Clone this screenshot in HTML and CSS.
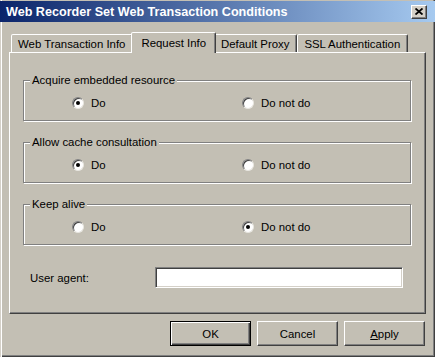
FILE: index.html
```html
<!DOCTYPE html>
<html lang="en">
<head>
    <meta charset="UTF-8">
    <title>Web Recorder Set Web Transaction Conditions</title>
    <link rel="stylesheet" href="styles.css">
</head>
<body>
    <div class="window">
        <div class="titlebar">
            <span class="title">Web Recorder Set Web Transaction Conditions</span>
            <span class="close">
                <svg width="8" height="7" viewBox="0 0 8 7">
                    <path d="M0.5 0.5 L7.5 6.5 M7.5 0.5 L0.5 6.5" stroke="#000" stroke-width="1.8" fill="none"/>
                </svg>
            </span>
        </div>
        <div class="content">
            <div class="tabs">
                <div class="tab">Web Transaction Info</div>
                <div class="tab active">Request Info</div>
                <div class="tab">Default Proxy</div>
                <div class="tab">SSL Authentication</div>
            </div>
            <div class="panel">
                <fieldset class="group">
                    <legend>Acquire embedded resource</legend>
                    <div class="options">
                        <label class="option"><span class="radio checked"></span>Do</label>
                        <label class="option"><span class="radio"></span>Do not do</label>
                    </div>
                </fieldset>
                <fieldset class="group">
                    <legend>Allow cache consultation</legend>
                    <div class="options">
                        <label class="option"><span class="radio checked"></span>Do</label>
                        <label class="option"><span class="radio"></span>Do not do</label>
                    </div>
                </fieldset>
                <fieldset class="group">
                    <legend>Keep alive</legend>
                    <div class="options">
                        <label class="option"><span class="radio"></span>Do</label>
                        <label class="option"><span class="radio checked"></span>Do not do</label>
                    </div>
                </fieldset>
                <div class="field">
                    <span class="field-label">User agent:</span>
                    <div class="input"></div>
                </div>
            </div>
            <div class="buttons">
                <button class="btn default">OK</button>
                <button class="btn">Cancel</button>
                <button class="btn"><u>A</u>pply</button>
            </div>
        </div>
    </div>
</body>
</html>
```

FILE: styles.css
```css
* {
    box-sizing: border-box;
}
body {
    margin: 0;
    font-family: "Liberation Sans", Arial, sans-serif;
    font-size: 11.4px;
    color: #000;
    background-color: #c3bfb4;
}
.window {
    width: 435px;
    height: 357px;
    padding-top: 1px;
    background-color: #c3bfb4;
    box-shadow: inset 1px 0 0 #d4d0c8, inset 2px 0 0 #fff, inset -1px -1px 0 #404040, inset -2px -2px 0 #808080;
}
.titlebar {
    height: 21px;
    display: flex;
    align-items: center;
    justify-content: space-between;
    padding: 0 8px 0 6px;
    background: linear-gradient(to right, #0a246a, #a6caf0);
}
.title {
    color: #fff;
    font-weight: bold;
    font-size: 12.6px;
}
.close {
    width: 16px;
    height: 14px;
    display: flex;
    align-items: center;
    justify-content: center;
    background-color: #d4d0c8;
    border: 1px solid;
    border-color: #fff #404040 #404040 #fff;
    box-shadow: inset -1px -1px 0 #808080;
}
.content {
    padding: 10px 9px 0;
}
.tabs {
    height: 20px;
    display: flex;
    align-items: flex-end;
    padding-left: 2px;
}
.tab {
    height: 18px;
    padding: 0 7px 0 6px;
    display: flex;
    align-items: center;
    border: 1px solid;
    border-bottom: none;
    border-color: #fff #404040 transparent #fff;
    border-radius: 2px 2px 0 0;
    box-shadow: inset -1px 0 0 #808080;
    background-color: #c3bfb4;
}
.tab.active {
    height: 21px;
    margin: 0 -2px -1px;
    padding: 0 9px;
    position: relative;
    z-index: 2;
}
.panel {
    height: 262px;
    padding: 20px 14px 0 13px;
    border: 1px solid;
    border-color: #fff #404040 #404040 #fff;
    box-shadow: inset -1px -1px 0 #808080;
}
.group {
    margin: 0 0 14px;
    padding: 9px 0 10px;
    min-width: 0;
    border: 1px solid #808080;
    box-shadow: inset 1px 1px 0 #fff, 1px 1px 0 #fff;
}
.group legend {
    margin-left: 6px;
    padding: 0 2px;
    line-height: 14px;
    background-color: #c3bfb4;
}
.options {
    display: grid;
    grid-template-columns: 170px auto;
    padding-left: 48px;
}
.option {
    display: flex;
    align-items: center;
    gap: 7px;
    line-height: 14px;
}
.radio {
    width: 12px;
    height: 12px;
    border-radius: 50%;
    background-color: #fff;
    border: 1px solid;
    border-color: #808080 #e8e6e0 #e8e6e0 #808080;
    box-shadow: inset 1px 1px 0 #404040;
    display: flex;
    align-items: center;
    justify-content: center;
}
.radio.checked::after {
    content: "";
    width: 4px;
    height: 4px;
    border-radius: 50%;
    background-color: #000;
}
.field {
    display: flex;
    align-items: center;
    margin-top: 22px;
    padding-left: 7px;
}
.field-label {
    width: 125px;
}
.input {
    width: 248px;
    height: 21px;
    background-color: #fff;
    border: 1px solid;
    border-color: #808080 #fff #fff #808080;
    box-shadow: inset 1px 1px 0 #404040, inset -1px -1px 0 #d4d0c8;
}
.buttons {
    display: flex;
    justify-content: flex-end;
    gap: 6px;
    margin-top: 7px;
    padding-right: 1px;
}
.btn {
    width: 81px;
    height: 25px;
    padding: 0;
    font: inherit;
    color: #000;
    background-color: #c3bfb4;
    border: 1px solid;
    border-color: #fff #404040 #404040 #fff;
    box-shadow: inset -1px -1px 0 #808080;
}
.btn.default {
    border-color: #000;
    box-shadow: inset 1px 1px 0 #fff, inset -1px -1px 0 #404040, inset -2px -2px 0 #808080;
}
```
